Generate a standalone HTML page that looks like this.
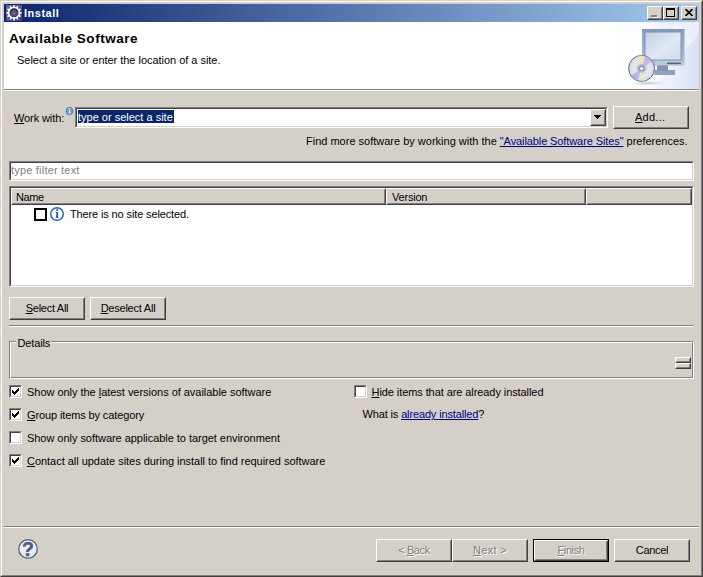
<!DOCTYPE html>
<html>
<head>
<meta charset="utf-8">
<title>Install</title>
<style>
html,body{margin:0;padding:0;}
body{width:703px;height:577px;overflow:hidden;background:#d4d0c8;font-family:"Liberation Sans",sans-serif;font-size:11px;color:#000;position:relative;}
.a{position:absolute;}
.t{position:absolute;white-space:nowrap;line-height:13px;height:13px;}
u{text-decoration:underline;text-underline-offset:1px;}
/* window frame */
#frame{left:0;top:0;width:703px;height:577px;box-sizing:border-box;border:1px solid;border-color:#d4d0c8 #404040 #404040 #d4d0c8;}
#frame2{left:1px;top:1px;width:701px;height:575px;box-sizing:border-box;border:1px solid;border-color:#fff #808080 #808080 #fff;}
#title{left:4px;top:4px;width:695px;height:18px;background:linear-gradient(to right,#0a246a 0%,#a6caf0 100%);}
#banner{left:4px;top:22px;width:695px;height:67px;background:#fff;}
.btn{position:absolute;box-sizing:border-box;background:#d4d0c8;border:1px solid;border-color:#fff #404040 #404040 #fff;}
.btn:before{content:"";position:absolute;left:0;top:0;right:0;bottom:0;border:1px solid;border-color:#d4d0c8 #808080 #808080 #d4d0c8;}
.btn span{position:absolute;left:0;right:0;top:4px;text-align:center;line-height:13px;white-space:nowrap;}
.dis span{color:#808080;text-shadow:1px 1px 0 #fff;}
.sunk{position:absolute;box-sizing:border-box;background:#fff;border:1px solid;border-color:#808080 #fff #fff #808080;}
.sunk:before{content:"";position:absolute;left:0;top:0;right:0;bottom:0;border:1px solid;border-color:#404040 #d4d0c8 #d4d0c8 #404040;}
.cb{position:absolute;width:13px;height:13px;box-sizing:border-box;background:#fff;border:1px solid;border-color:#808080 #fff #fff #808080;}
.cb:before{content:"";position:absolute;left:0;top:0;right:0;bottom:0;border:1px solid;border-color:#404040 #d4d0c8 #d4d0c8 #404040;}
.cb svg{position:absolute;left:2px;top:2px;}
.hline{position:absolute;height:1px;}
.hd{box-sizing:border-box;background:#d4d0c8;border:1px solid;border-color:#fff #404040 #404040 #fff;}
.hd:before{content:"";position:absolute;left:0;top:0;right:0;bottom:0;border:1px solid;border-color:#d4d0c8 #808080 #808080 #d4d0c8;}
a{color:#000080;text-decoration:underline;}
</style>
</head>
<body>
<div class="a" id="title"></div>
<div class="a" id="banner"></div>
<div class="a" id="frame"></div>
<div class="a" id="frame2"></div>

<!-- title bar -->
<svg class="a" style="left:6px;top:5px" width="16" height="16" viewBox="0 0 16 16">
  <defs><linearGradient id="ib" x1="0" y1="0" x2="1" y2="1"><stop offset="0" stop-color="#6a6aa8"/><stop offset="1" stop-color="#3c3c86"/></linearGradient>
  <radialGradient id="ic" cx="0.5" cy="0.55" r="0.5"><stop offset="0" stop-color="#7a6a80"/><stop offset="0.7" stop-color="#504880"/><stop offset="1" stop-color="#16162c"/></radialGradient></defs>
  <rect width="16" height="16" fill="url(#ib)"/>
  <g fill="#fff"><circle cx="8" cy="7.800" r="6.100"/><rect x="7.150" y="0.200" width="1.700" height="3" rx="0.500" transform="rotate(0 8 7.800)"/><rect x="7.150" y="0.200" width="1.700" height="3" rx="0.500" transform="rotate(30 8 7.800)"/><rect x="7.150" y="0.200" width="1.700" height="3" rx="0.500" transform="rotate(60 8 7.800)"/><rect x="7.150" y="0.200" width="1.700" height="3" rx="0.500" transform="rotate(90 8 7.800)"/><rect x="7.150" y="0.200" width="1.700" height="3" rx="0.500" transform="rotate(120 8 7.800)"/><rect x="7.150" y="0.200" width="1.700" height="3" rx="0.500" transform="rotate(150 8 7.800)"/><rect x="7.150" y="0.200" width="1.700" height="3" rx="0.500" transform="rotate(180 8 7.800)"/><rect x="7.150" y="0.200" width="1.700" height="3" rx="0.500" transform="rotate(210 8 7.800)"/><rect x="7.150" y="0.200" width="1.700" height="3" rx="0.500" transform="rotate(240 8 7.800)"/><rect x="7.150" y="0.200" width="1.700" height="3" rx="0.500" transform="rotate(270 8 7.800)"/><rect x="7.150" y="0.200" width="1.700" height="3" rx="0.500" transform="rotate(300 8 7.800)"/><rect x="7.150" y="0.200" width="1.700" height="3" rx="0.500" transform="rotate(330 8 7.800)"/></g>
  <circle cx="8" cy="7.800" r="4.500" fill="url(#ic)"/>
</svg>
<div class="t" id="t_title" style="left:24px;top:7px;color:#fff;font-weight:bold;letter-spacing:0.5px;">Install</div>

<!-- caption buttons -->
<div class="btn" style="left:647px;top:6px;width:16px;height:14px;"><i class="a" style="left:4px;top:9px;width:6px;height:2px;background:#fff"></i><i class="a" style="left:3px;top:8px;width:6px;height:2px;background:#808080"></i></div>
<div class="btn" style="left:663px;top:6px;width:16px;height:14px;"><i class="a" style="left:2px;top:1px;width:9px;height:9px;box-sizing:border-box;border:1px solid #000;border-top-width:2px"></i></div>
<div class="btn" style="left:681px;top:6px;width:16px;height:14px;">
  <svg class="a" style="left:3px;top:2px" width="8" height="7" viewBox="0 0 8 7"><path d="M0.5 0 L7.5 7 M7.5 0 L0.5 7" stroke="#000" stroke-width="1.6" fill="none"/></svg>
</div>

<!-- banner -->
<svg class="a" style="left:604px;top:22px" width="95" height="67" viewBox="604 22 95 67">
  <defs>
    <linearGradient id="bg" x1="0" y1="0" x2="1" y2="0"><stop offset="0" stop-color="#ffffff"/><stop offset="0.35" stop-color="#fdfeff"/><stop offset="0.7" stop-color="#eaf0fa"/><stop offset="1" stop-color="#d8e2f4"/></linearGradient>
    <linearGradient id="scr" x1="0" y1="0" x2="1" y2="1"><stop offset="0" stop-color="#bfcce3"/><stop offset="0.55" stop-color="#e2e9f4"/><stop offset="1" stop-color="#cdd8ea"/></linearGradient>
    <linearGradient id="frm" x1="0" y1="0" x2="0" y2="1"><stop offset="0" stop-color="#8395b8"/><stop offset="0.12" stop-color="#93a3c2"/><stop offset="1" stop-color="#aebbd3"/></linearGradient>
    <radialGradient id="cdg" cx="0.5" cy="0.5" r="0.5"><stop offset="0" stop-color="#c4c9d6"/><stop offset="0.6" stop-color="#e6e8f0"/><stop offset="1" stop-color="#d2d6e0"/></radialGradient>
    <radialGradient id="shd" cx="0.5" cy="0.5" r="0.5"><stop offset="0" stop-color="#b4b9c6" stop-opacity="0.85"/><stop offset="1" stop-color="#d0d4dc" stop-opacity="0"/></radialGradient>
    <filter id="bl" x="-10%" y="-10%" width="120%" height="120%"><feGaussianBlur stdDeviation="0.35"/></filter>
  </defs>
  <rect x="604" y="22" width="95" height="67" fill="url(#bg)"/>
  <polygon points="676,22 699,22 699,34 652,89 634,89" fill="#ffffff" opacity="0.4"/>
  <g filter="url(#bl)">
  <!-- monitor -->
  <rect x="654.500" y="70" width="20.500" height="5" fill="#93a0bd"/>
  <rect x="657" y="65" width="11" height="6" fill="#8493b3"/>
  <rect x="642" y="29" width="42.500" height="36.500" fill="url(#frm)"/>
  <rect x="645" y="32" width="36" height="28" fill="url(#scr)" stroke="#7486aa" stroke-width="0.800"/>
  <rect x="643" y="60.800" width="40.500" height="4.200" fill="#bac6dc"/>
  <rect x="667" y="62.600" width="14" height="1.500" fill="#56617e"/>
  <!-- cd -->
  <ellipse cx="648" cy="83.200" rx="20" ry="2.400" fill="url(#shd)"/>
  <circle cx="641.600" cy="68.400" r="13" fill="url(#cdg)" stroke="#5d6470" stroke-width="1"/>
  <path d="M641.600 68.400 L637.500 56.200 A13 13 0 0 1 644.500 55.900 Z" fill="#eaeaa8" opacity="0.75"/>
  <path d="M641.600 68.400 L645.500 56.100 A13 13 0 0 1 652.300 61 Z" fill="#b7a4f0" opacity="0.75"/>
  <path d="M641.600 68.400 L637.500 80.700 A13 13 0 0 1 631 75.800 Z" fill="#aaa8f0" opacity="0.75"/>
  <path d="M641.600 68.400 L645.500 80.700 A13 13 0 0 1 638.800 81 Z" fill="#e6e8b4" opacity="0.65"/>
  <circle cx="641.600" cy="68.400" r="4.200" fill="#adb3c6"/>
  <circle cx="641.600" cy="68.400" r="2.700" fill="#8f97ae"/>
  <circle cx="641.600" cy="68.400" r="1.500" fill="#ffffff"/>
  </g>
</svg>

<div class="t" id="t_avail" style="left:9px;top:31px;font-size:13.5px;font-weight:bold;line-height:16px;height:16px;letter-spacing:0.53px;">Available Software</div>
<div class="t" id="t_sel" style="left:17px;top:54px;letter-spacing:-0.03px;">Select a site or enter the location of a site.</div>

<div class="hline" style="left:4px;top:89px;width:695px;background:#808080"></div>
<div class="hline" style="left:4px;top:90px;width:695px;background:#fff"></div>

<!-- work with -->
<div class="t" id="t_work" style="left:14px;top:112px;letter-spacing:-0.1px;"><u>W</u>ork with:</div>
<svg class="a" style="left:65px;top:106px" width="9" height="10" viewBox="65 106 9 10">
  <ellipse cx="69.500" cy="111" rx="3.400" ry="3.700" fill="#6b9fd6" stroke="#4677ae" stroke-width="0.900"/>
  <rect x="68.400" y="108.300" width="2.200" height="1" fill="#dcecfb"/>
  <rect x="69" y="109.900" width="1.100" height="3" fill="#dcecfb"/>
  <rect x="68.300" y="112.600" width="2.500" height="0.900" fill="#dcecfb"/>
</svg>
<div class="sunk" style="left:75px;top:107px;width:533px;height:21px;"></div>
<div class="a" style="left:78px;top:110px;width:96px;height:13px;background:#0a246a"></div>
<div class="t" id="t_type" style="left:78px;top:111px;color:#fff;">type or select a site</div>
<div class="btn" style="left:590px;top:109px;width:16px;height:17px;">
  <svg class="a" style="left:3px;top:5px" width="7" height="4" viewBox="0 0 7 4" shape-rendering="crispEdges"><path d="M0 0h7v1h-1v1h-1v1h-1v1h-1v-1h-1v-1h-1v-1h-1z" fill="#000"/></svg>
</div>
<div class="btn" style="left:613px;top:106px;width:76px;height:23px;"><span id="t_add" style="letter-spacing:0.25px;text-align:left;left:21px"><u>A</u>dd...</span></div>

<div class="t" id="t_find" style="left:306px;top:135px;">Find more software by working with the <a style="letter-spacing:-0.1px">"Available Software Sites"</a> preferences.</div>

<!-- filter -->
<div class="sunk" style="left:9px;top:161px;width:685px;height:20px;"></div>
<div class="t" id="t_filter" style="left:11px;top:164px;color:#808080;letter-spacing:0.2px;">type filter text</div>

<!-- table -->
<div class="sunk" style="left:9px;top:186px;width:685px;height:101px;"></div>
<!-- header -->
<div class="a hd" style="left:11px;top:188px;width:375px;height:17px;"></div>
<div class="a hd" style="left:386px;top:188px;width:200px;height:17px;"></div>
<div class="a hd" style="left:586px;top:188px;width:106px;height:17px;"></div>
<div class="t" id="t_name" style="left:16px;top:191px;letter-spacing:-0.4px;">Name</div>
<div class="t" id="t_ver" style="left:392px;top:191px;letter-spacing:-0.2px;">Version</div>

<div class="a" style="left:34px;top:208px;width:13px;height:13px;box-sizing:border-box;border:2px solid #000;background:#fff"></div>
<svg class="a" style="left:49px;top:205.500px" width="16" height="16" viewBox="0 0 16 16">
  <circle cx="8" cy="8" r="6.300" fill="#fff" stroke="#2a66b4" stroke-width="1.500"/>
  <text x="8" y="12.300" text-anchor="middle" font-family="Liberation Serif, serif" font-weight="bold" font-size="12.500" fill="#1c54a0">i</text>
</svg>
<div class="t" id="t_nosite" style="left:70px;top:208px;letter-spacing:-0.13px;">There is no site selected.</div>

<div class="btn" style="left:9px;top:297px;width:76px;height:23px;"><span id="t_selall" style="letter-spacing:-0.27px"><u>S</u>elect All</span></div>
<div class="btn" style="left:90px;top:297px;width:76px;height:23px;"><span id="t_deselall" style="letter-spacing:-0.23px"><u>D</u>eselect All</span></div>

<!-- sash -->
<div class="hline" style="left:9px;top:325px;width:685px;background:#808080"></div>
<div class="hline" style="left:9px;top:326px;width:685px;background:#fff"></div>

<!-- details group -->
<div class="a" style="left:9px;top:341px;width:685px;height:38px;box-sizing:border-box;border:1px solid;border-color:#808080 #fff #fff #808080;"></div>
<div class="a" style="left:10px;top:342px;width:683px;height:36px;box-sizing:border-box;border:1px solid;border-color:#fff #808080 #808080 #fff;"></div>
<div class="a" style="left:16px;top:341px;width:35px;height:2px;background:#d4d0c8"></div>
<div class="t" id="t_details" style="left:17.500px;top:337px;letter-spacing:-0.15px;">Details</div>
<div class="btn" style="left:675px;top:357px;width:16px;height:6px;"></div>
<div class="btn" style="left:675px;top:363px;width:16px;height:6px;"></div>

<div class="cb" style="left:9px;top:385px;"><svg width="7" height="7" viewBox="0 0 7 7"><path d="M0 2v3h1v1h1v1h1v-1h1v-1h1v-1h1v-1h1v-3h-1v1h-1v1h-1v1h-1v1h-1v-1h-1v-1z" fill="#000"/></svg></div>
<div class="t" id="t_c1" style="left:27px;top:386px;letter-spacing:-0.03px;">Show only the <u>l</u>atest versions of available software</div>
<div class="cb" style="left:9px;top:408px;"><svg width="7" height="7" viewBox="0 0 7 7"><path d="M0 2v3h1v1h1v1h1v-1h1v-1h1v-1h1v-1h1v-3h-1v1h-1v1h-1v1h-1v1h-1v-1h-1v-1z" fill="#000"/></svg></div>
<div class="t" id="t_c2" style="left:27px;top:409px;letter-spacing:-0.12px;"><u>G</u>roup items by category</div>
<div class="cb" style="left:9px;top:431px;"></div>
<div class="t" id="t_c3" style="left:27px;top:432px;letter-spacing:-0.04px;">Show only software applicable to target environment</div>
<div class="cb" style="left:9px;top:454px;"><svg width="7" height="7" viewBox="0 0 7 7"><path d="M0 2v3h1v1h1v1h1v-1h1v-1h1v-1h1v-1h1v-3h-1v1h-1v1h-1v1h-1v1h-1v-1h-1v-1z" fill="#000"/></svg></div>
<div class="t" id="t_c4" style="left:27px;top:455px;letter-spacing:-0.03px;"><u>C</u>ontact all update sites during install to find required software</div>

<div class="cb" style="left:354px;top:385px;"></div>
<div class="t" id="t_c5" style="left:371.500px;top:386px;letter-spacing:-0.08px;"><u>H</u>ide items that are already installed</div>
<div class="t" id="t_what" style="left:362.500px;top:408px;letter-spacing:-0.14px;">What is <a>already installed</a>?</div>

<div class="hline" style="left:4px;top:526px;width:695px;background:#808080"></div>
<div class="hline" style="left:4px;top:527px;width:695px;background:#fff"></div>

<!-- help -->
<svg class="a" style="left:17px;top:538px" width="22" height="22" viewBox="0 0 22 22">
  <defs><linearGradient id="hg" x1="0" y1="0" x2="0" y2="1"><stop offset="0" stop-color="#f6f8fc"/><stop offset="1" stop-color="#dfe4ee"/></linearGradient></defs>
  <circle cx="11" cy="11" r="9.300" fill="url(#hg)" stroke="#56607e" stroke-width="1.300"/>
  <text x="11" y="17.800" text-anchor="middle" font-family="Liberation Sans, sans-serif" font-weight="bold" font-size="19.500" fill="#56617f" stroke="#465070" stroke-width="0.400">?</text>
</svg>

<div class="btn dis" style="left:376px;top:539px;width:76px;height:23px;"><span id="t_back" style="letter-spacing:-0.4px">&lt; <u>B</u>ack</span></div>
<div class="btn dis" style="left:452px;top:539px;width:76px;height:23px;"><span id="t_next" style="letter-spacing:0.3px"><u>N</u>ext &gt;</span></div>
<div class="a" style="left:533px;top:539px;width:76px;height:23px;background:#000"></div>
<div class="btn dis" style="left:534px;top:540px;width:74px;height:21px;"><span id="t_finish" style="top:3px;letter-spacing:-0.4px"><u>F</u>inish</span></div>
<div class="btn" style="left:614px;top:539px;width:76px;height:23px;"><span id="t_cancel" style="letter-spacing:-0.3px">Cancel</span></div>
</body>
</html>
